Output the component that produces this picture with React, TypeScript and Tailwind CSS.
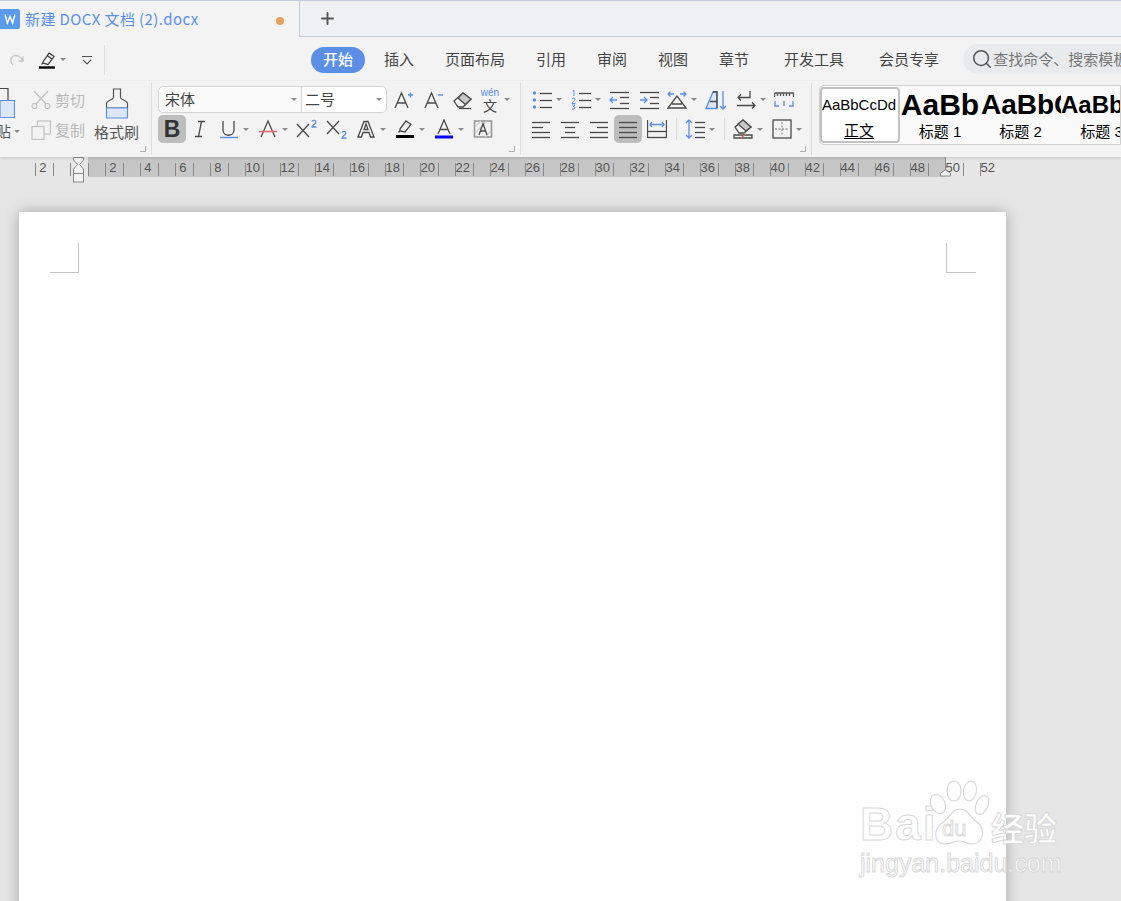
import type { ReactNode } from "react"
import { Plus, Search } from "lucide-react"

const ink = "#4a4a4a"
const blue = "#5b8fe6"

function Caret() {
  return <span className="w-0 h-0 border-x-[3px] border-x-transparent border-t-[3px] border-t-[#8a8a8a]" />
}

function Tool({ className, caret, children }: { className: string; caret?: boolean; children: ReactNode }) {
  return (
    <div className={`h-full flex items-center justify-center gap-[4px] shrink-0 ${className}`}>
      {children}
      {caret && <Caret />}
    </div>
  )
}

function Ico({ children, w = 20, h = 20 }: { children: ReactNode; w?: number; h?: number }) {
  return (
    <svg width={w} height={h} viewBox={`0 0 ${w} ${h}`} fill="none" stroke={ink} strokeWidth="1.3">
      {children}
    </svg>
  )
}

function Lines({ x1, x2, ys, color = ink }: { x1: number; x2: number; ys: number[]; color?: string }) {
  return (
    <>
      {ys.map((y) => (
        <path key={y} d={`M${x1} ${y}.5H${x2}`} stroke={color} />
      ))}
    </>
  )
}

function Launcher() {
  return (
    <svg width="6" height="6" viewBox="0 0 6 6" fill="none" stroke="#b0b0b0" className="absolute right-[5px] bottom-[3px]">
      <path d="M0 5.5H5.5V0" />
    </svg>
  )
}

function Sep({ className }: { className: string }) {
  return <div className={`w-px bg-[#dcdcdc] ${className}`} />
}

function TabBar() {
  return (
    <div className="h-[37px] flex bg-[#f0f1f5] border-t border-[#c4cadb]">
      <div className="w-[300px] h-[37px] -mt-px bg-[#f3f3f3] border-t border-r border-[#c4cadb] flex items-center relative z-10">
        <div className="w-[20px] h-[20px] bg-[#5b9bec] rounded-r-[2px] flex items-center justify-center">
          <svg width="14" height="12" viewBox="0 0 14 12" fill="none" stroke="#fff" strokeWidth="1.4">
            <path d="M2 1.5L4.4 10L7 3.5L9.6 10L12 1.5" />
          </svg>
        </div>
        <span className="ml-[5px] text-[15px] tracking-[0.4px] text-[#5b8fe6] whitespace-nowrap">新建 DOCX 文档 (2).docx</span>
        <span className="absolute left-[276px] top-[16px] w-[8px] h-[8px] rounded-full bg-[#e9a05c]" />
      </div>
      <div className="flex-1 border-b border-[#c4cadb] flex items-center pl-[18px]">
        <Plus size={19} strokeWidth={2.4} color="#555" />
      </div>
    </div>
  )
}

function MenuBar() {
  return (
    <div className="h-[44px] flex items-center bg-[#f3f3f3] text-[15px] text-[#444] whitespace-nowrap">
      <div className="w-[105px] h-[30px] mt-[1px] flex items-center border-r border-[#dcdcdc] shrink-0">
        <svg width="16" height="16" viewBox="0 0 16 16" fill="none" stroke="#c4c4c4" strokeWidth="1.3" className="ml-[9px]">
          <path d="M14 4.5V9H9.5M14 9C12 4.5 8 2.5 4.5 4C1 6 1 10.5 4 13" />
        </svg>
        <div className="ml-[13px] flex items-center gap-[4px]">
          <svg width="18" height="18" viewBox="0 0 18 18" fill="none" stroke="#333" strokeWidth="1.2">
            <path d="M5 11L11 2L16 5.5L10 13.5L5 12Z M3.5 13.5L5 11.5M9 4.5L14 8" />
            <path d="M1 16.5H17" stroke="#000" strokeWidth="2.4" />
          </svg>
          <Caret />
        </div>
        <svg width="10" height="10" viewBox="0 0 10 10" fill="none" stroke="#555" strokeWidth="1.1" className="ml-[16px]">
          <path d="M0 1.5H10M1 5L5 9L9 5" />
        </svg>
      </div>
      <div className="ml-[206px] w-[54px] h-[26px] mt-[1px] rounded-full bg-[#5b8fe6] text-white font-medium flex items-center justify-center shrink-0">开始</div>
      <div className="ml-[19px] flex items-center gap-[31px]">
        <span>插入</span>
        <span>页面布局</span>
        <span>引用</span>
        <span>审阅</span>
        <span>视图</span>
        <span>章节</span>
        <span className="ml-[4px]">开发工具</span>
        <span className="ml-[4px]">会员专享</span>
      </div>
      <div className="ml-[24px] h-[30px] flex-1 rounded-l-full bg-[#e9eaec] flex items-center pl-[8px] overflow-hidden text-[#777]">
        <Search size={22} strokeWidth={1.7} color="#555" className="shrink-0" />
        <span>查找命令、搜索模板</span>
      </div>
    </div>
  )
}

function ClipboardGroup() {
  return (
    <div className="w-[152px] h-[72px] mt-[2px] shrink-0 flex relative border-r border-[#dcdcdc]">
      <div className="w-[24px] overflow-hidden flex flex-col items-end shrink-0">
        <div className="h-[35px] pt-[5px] pr-[9px]">
          <svg width="15" height="30" viewBox="0 0 15 30" fill="none" stroke={blue} strokeWidth="1.2" className="block">
            <path d="M0 0.5H8V12" stroke="#444" />
            <path d="M0 12.5H14.5V29.5H0Z" fill="#dde6f6" />
          </svg>
        </div>
        <div className="mt-[2px] pr-[4px] flex items-center gap-[3px] text-[15px] text-[#555] whitespace-nowrap">
          粘贴
          <Caret />
        </div>
      </div>
      <div className="w-[64px] flex flex-col text-[15px] text-[#b8b8b8] shrink-0">
        <div className="h-[30px] mt-[2px] flex items-center">
          <svg width="20" height="20" viewBox="0 0 20 20" fill="none" stroke="#c0c0c0" strokeWidth="1.2" className="ml-[7px]">
            <circle cx="3.5" cy="16" r="2.5" />
            <circle cx="16.5" cy="16" r="2.5" />
            <path d="M5 14L17 1M15 14L3 1" />
          </svg>
          <span className="ml-[4px] whitespace-nowrap">剪切</span>
        </div>
        <div className="h-[30px] flex items-center">
          <svg width="20" height="20" viewBox="0 0 20 20" fill="none" stroke="#c0c0c0" strokeWidth="1.2" className="ml-[7px]">
            <rect x="6.5" y="1" width="13" height="13" />
            <rect x="1" y="6.5" width="12" height="13" fill="#f3f3f3" />
          </svg>
          <span className="ml-[4px] whitespace-nowrap">复制</span>
        </div>
      </div>
      <div className="w-[55px] flex flex-col items-center pt-[5px] pl-[2px] shrink-0">
        <svg width="24" height="31" viewBox="0 0 24 31" fill="none" stroke="#555" strokeWidth="1.2">
          <path d="M8.5 1H15.5V9.5C15.5 12 22.5 12 22.5 15.5V20H1.5V15.5C1.5 12 8.5 12 8.5 9.5Z" />
          <path d="M1.5 20H22.5V30H1.5Z" fill="#dde6f6" stroke={blue} />
        </svg>
        <span className="mt-[2px] text-[15px] text-[#555] whitespace-nowrap">格式刷</span>
      </div>
      <Launcher />
    </div>
  )
}

function FontGroup() {
  return (
    <div className="w-[369px] h-[72px] mt-[2px] shrink-0 relative border-r border-[#dcdcdc] pl-[6px] flex flex-col">
      <div className="h-[29px] mt-[2px] flex items-center text-[#444]">
        <div className="w-[229px] h-[27px] flex bg-white border border-[#d4d4d4] rounded-[5px] shrink-0 text-[15px]">
          <div className="w-[143px] flex items-center pl-[6px] border-r border-[#d4d4d4] relative bg-[#fafafa] rounded-l-[5px]">
            宋体
            <span className="absolute right-[4px] top-[11px] flex"><Caret /></span>
          </div>
          <div className="flex-1 flex items-center pl-[3px] relative">
            二号
            <span className="absolute right-[4px] top-[11px] flex"><Caret /></span>
          </div>
        </div>
        <Tool className="w-[32px]">
          <Ico>
            <path d="M2 18L8.5 3L15 18M4.5 13H12.5" />
            <path d="M15 5H20M17.5 2.5V7.5" stroke={blue} strokeWidth="1.4" />
          </Ico>
        </Tool>
        <Tool className="w-[28px]">
          <Ico>
            <path d="M2 18L8.5 3L15 18M4.5 13H12.5" />
            <path d="M15 5H20" stroke={blue} strokeWidth="1.4" />
          </Ico>
        </Tool>
        <Tool className="w-[30px]">
          <Ico>
            <path d="M2 11L11 3L19 9L11 17H6Z" />
            <path d="M11 3L19 9L13.5 14.5L6 8Z" fill="#c8c8c8" />
            <path d="M7 18.5H19" />
          </Ico>
        </Tool>
        <Tool className="w-[36px]" caret>
          <div className="w-[20px] flex flex-col items-center">
            <span className="text-[10px] leading-[10px] text-[#5b8fe6] [font-family:'Liberation_Sans']">wén</span>
            <span className="text-[14px] leading-[14px] text-[#444]">文</span>
          </div>
        </Tool>
      </div>
      <div className="h-[28px] mt-[1px] flex items-center">
        <Tool className="w-[28px] bg-[#bdbdbd] rounded-[5px]">
          <span className="text-[23px] font-bold text-[#333] [font-family:'Liberation_Sans']">B</span>
        </Tool>
        <Tool className="w-[28px]">
          <Ico><path d="M8 2.5H15M5 17.5H12M11.5 2.5L8.5 17.5" /></Ico>
        </Tool>
        <Tool className="w-[40px]" caret>
          <Ico>
            <path d="M4 2V11C4 18 15 18 15 11V2" />
            <path d="M1 18.5H19" stroke={blue} strokeWidth="1.4" />
          </Ico>
        </Tool>
        <Tool className="w-[38px]" caret>
          <Ico>
            <path d="M3 18L10 2L17 18" />
            <path d="M1 12.5H19" stroke="#e06c6c" strokeWidth="1.6" />
          </Ico>
        </Tool>
        <Tool className="w-[30px]">
          <Ico w={22}>
            <path d="M1 5L13 18M13 5L1 18" />
            <path d="M16 2.5C17 1 20 1 20 3C20 5 16 6 16 8H20.5" stroke={blue} />
          </Ico>
        </Tool>
        <Tool className="w-[30px]">
          <Ico w={22}>
            <path d="M1 2L13 15M13 2L1 15" />
            <path d="M16 13.5C17 12 20 12 20 14C20 16 16 17 16 19H20.5" stroke={blue} />
          </Ico>
        </Tool>
        <Tool className="w-[38px]" caret>
          <Ico>
            <path d="M2 18L8 2.5H12L18 18H14.5L13 13.5H7L5.5 18ZM8 10.5H12L10 5Z" />
          </Ico>
        </Tool>
        <Tool className="w-[40px]" caret>
          <Ico>
            <path d="M5 10L11 2L16 5.5L10 13L5 12Z" />
            <path d="M3.5 13.5L5 11.5" />
            <path d="M1 17.5H19" stroke="#000" strokeWidth="3" />
          </Ico>
        </Tool>
        <Tool className="w-[38px]" caret>
          <Ico>
            <path d="M4 15L10 1L16 15M6 10.5H14" />
            <path d="M1 18H19" stroke="#0000f0" strokeWidth="3" />
          </Ico>
        </Tool>
        <Tool className="w-[30px]">
          <Ico>
            <rect x="1.5" y="2" width="17" height="16" stroke="#999" strokeWidth="1.6" />
            <path d="M2 8L8 2M2 14L14 2M12 18L18 12" stroke="#ccc" />
            <path d="M6 16L10 4.5L14 16M7.5 12H12.5" />
          </Ico>
        </Tool>
      </div>
      <Launcher />
    </div>
  )
}

function ParagraphGroup() {
  return (
    <div className="w-[291px] h-[72px] mt-[2px] shrink-0 relative border-r border-[#dcdcdc] pl-[5px] flex flex-col">
      <div className="h-[29px] mt-[2px] flex items-center">
        <Tool className="w-[42px]" caret>
          <Ico>
            <circle cx="2.5" cy="3" r="1.7" fill={blue} stroke="none" />
            <circle cx="2.5" cy="10" r="1.7" fill={blue} stroke="none" />
            <circle cx="2.5" cy="17" r="1.7" fill={blue} stroke="none" />
            <Lines x1={8} x2={20} ys={[3, 10, 17]} />
          </Ico>
        </Tool>
        <Tool className="w-[36px]" caret>
          <Ico>
            <path d="M1.5 1L3 0.5V6M1 9C2 7.5 4 8 4 9.5C4 11 1 12 1 13.5H4.5M1 15H4L2.5 16.5C4.5 16.5 4.5 19.5 1 19" stroke={blue} strokeWidth="1" />
            <Lines x1={8} x2={20} ys={[3, 10, 17]} />
          </Ico>
        </Tool>
        <Tool className="w-[30px]">
          <Ico>
            <Lines x1={1} x2={20} ys={[2, 18]} />
            <Lines x1={11} x2={20} ys={[7, 13]} />
            <path d="M8 10H1M4 7L1 10L4 13" stroke={blue} />
          </Ico>
        </Tool>
        <Tool className="w-[30px]">
          <Ico>
            <Lines x1={1} x2={20} ys={[2, 18]} />
            <Lines x1={11} x2={20} ys={[7, 13]} />
            <path d="M1 10H8M5 7L8 10L5 13" stroke={blue} />
          </Ico>
        </Tool>
        <Tool className="w-[36px]" caret>
          <Ico>
            <path d="M1 18L10 6L19 18H1Z M5 14H15" />
            <path d="M1 4H7M3.5 1.5L1 4L3.5 6.5M13 4H19M16.5 1.5L19 4L16.5 6.5" stroke={blue} />
          </Ico>
        </Tool>
        <Tool className="w-[32px]">
          <Ico w={22}>
            <path d="M1 18.5L8 2H12V18.5H1Z" fill="#dde6f6" stroke={blue} />
            <path d="M8 2H12V18M5 11.5H12" />
            <path d="M18 1V19M15 16L18 19L21 16" stroke={blue} />
          </Ico>
        </Tool>
        <Tool className="w-[38px]" caret>
          <Ico>
            <path d="M14 1V7.5H2M5 4.5L2 7.5L5 10.5" />
            <path d="M1 15.5H19M16 12.5L19 15.5L16 18.5" />
          </Ico>
        </Tool>
        <Tool className="w-[28px]">
          <Ico>
            <path d="M0.5 3H19.5V7M0.5 3V7M3.5 3V6M6.5 3V6M9.5 3V6M12.5 3V6M15.5 3V6" stroke="#555" />
            <path d="M1 11V16H5M15 16H19V11M10 11V16" stroke={blue} />
          </Ico>
        </Tool>
      </div>
      <div className="h-[28px] mt-[1px] flex items-center">
        <Tool className="w-[29px]">
          <Ico>
            <Lines x1={1} x2={19} ys={[3, 13, 18]} />
            <Lines x1={1} x2={12} ys={[8]} />
          </Ico>
        </Tool>
        <Tool className="w-[29px]">
          <Ico>
            <Lines x1={1} x2={19} ys={[3, 18]} />
            <Lines x1={5} x2={15} ys={[8, 13]} />
          </Ico>
        </Tool>
        <Tool className="w-[30px]">
          <Ico>
            <Lines x1={1} x2={19} ys={[3, 13, 18]} />
            <Lines x1={8} x2={19} ys={[8]} />
          </Ico>
        </Tool>
        <Tool className="w-[28px] bg-[#bdbdbd] rounded-[5px]">
          <Ico>
            <Lines x1={1} x2={19} ys={[3, 8, 13, 18]} />
          </Ico>
        </Tool>
        <Tool className="w-[30px]">
          <Ico>
            <path d="M0.5 1V19M19.5 1V19" />
            <Lines x1={1} x2={19} ys={[12, 18]} />
            <path d="M3 5.5H17M5 3L3 5.5L5 8M15 3L17 5.5L15 8" stroke={blue} />
          </Ico>
        </Tool>
        <div className="w-[8px] h-full flex items-center justify-center shrink-0"><Sep className="h-[22px]" /></div>
        <Tool className="w-[40px]" caret>
          <Ico>
            <path d="M4 1V19M1 4L4 1L7 4M1 16L4 19L7 16" stroke={blue} />
            <Lines x1={10} x2={20} ys={[3, 8, 13, 18]} />
          </Ico>
        </Tool>
        <div className="w-[8px] h-full flex items-center justify-center shrink-0"><Sep className="h-[22px]" /></div>
        <Tool className="w-[40px]" caret>
          <Ico>
            <path d="M2 8L10 1L18 8L11 14H6Z" />
            <path d="M10 1L18 8L13 12L5 5Z" fill="#c8c8c8" />
            <path d="M1 16H19V19H1Z" />
            <path d="M8 19L13 15" stroke="#e06c6c" />
          </Ico>
        </Tool>
        <Tool className="w-[38px]" caret>
          <Ico>
            <rect x="1" y="1" width="18" height="18" />
            <path d="M10 3V17M3 10H17" stroke="#999" strokeDasharray="2 1.5" />
          </Ico>
        </Tool>
      </div>
      <Launcher />
    </div>
  )
}

function StyleGallery() {
  return (
    <div className="ml-[7px] h-[60px] mt-[4px] flex-1 bg-[#fafafa] border border-[#cfcfcf] rounded-l-[5px] flex overflow-hidden text-black whitespace-nowrap [font-family:'Liberation_Sans','Noto_Sans_CJK_SC',sans-serif]">
      <div className="w-[80px] h-[56px] mt-[1px] border-2 border-[#c2c2c2] rounded-[4px] bg-white flex flex-col items-center shrink-0">
        <span className="h-[33px] flex items-center text-[15px] -ml-[2px]">AaBbCcDd</span>
        <span className="text-[15px] underline underline-offset-2 leading-[18px] -ml-[2px]">正文</span>
      </div>
      <div className="w-[80px] flex flex-col items-center overflow-hidden shrink-0">
        <span className="h-[37px] flex items-center text-[30px] font-bold">AaBb</span>
        <span className="text-[15px] leading-[18px]">标题 1</span>
      </div>
      <div className="w-[81px] flex flex-col items-center overflow-hidden shrink-0">
        <span className="h-[37px] w-full pl-[1px] flex items-center text-[28px] font-bold">AaBbC</span>
        <span className="text-[15px] leading-[18px]">标题 2</span>
      </div>
      <div className="w-[81px] flex flex-col items-center shrink-0">
        <span className="h-[37px] w-full flex items-center text-[24px] font-bold">AaBbC</span>
        <span className="text-[15px] leading-[18px]">标题 3</span>
      </div>
    </div>
  )
}

function Ribbon() {
  return (
    <div className="h-[76px] flex items-start bg-[#f3f3f3] shadow-[0_1px_3px_rgba(0,0,0,0.12)] relative z-10">
      <ClipboardGroup />
      <FontGroup />
      <ParagraphGroup />
      <StyleGallery />
    </div>
  )
}

function Ruler() {
  const cells = Array.from({ length: 55 }, (_, i) => i)
  return (
    <div className="h-[20px] pl-[35px] flex relative text-[13px] text-[#555] [font-family:'Liberation_Sans',sans-serif]">
      {cells.map((i) => {
        const x = 35 + i * 17.5
        const shaded = x >= 87 && x < 944
        const marks = i === 0 || (i >= 4 && i % 2 === 0)
        const value = i === 0 ? 2 : i - 2
        return (
          <div key={i} className={`w-[17.5px] h-full shrink-0 flex items-start relative ${shaded ? "bg-[#c6c6c6]" : ""}`}>
            <span className="absolute left-0 top-[6px] w-px h-[13px] bg-[#8a8a8a]" />
            {marks && <span className="w-full text-center leading-[21px] -ml-px">{value}</span>}
          </div>
        )
      })}
      <svg width="16" height="26" viewBox="0 0 16 26" fill="#f3f3f3" stroke="#888" className="absolute left-[71px] top-0">
        <path d="M2.5 0.5H12.5V3L8.5 7.5L12.5 12V16.5H2.5V12L6.5 7.5L2.5 3Z" />
        <rect x="2.5" y="16.5" width="10" height="8.5" />
      </svg>
      <svg width="14" height="20" viewBox="0 0 14 20" fill="#f3f3f3" stroke="#888" className="absolute left-[939px] top-0">
        <path d="M6.5 0V13" fill="none" />
        <path d="M1.5 19V16L6.5 13L11.5 16V19Z" />
      </svg>
    </div>
  )
}

function Watermark() {
  return (
    <div className="absolute left-[860px] top-[780px] w-[205px] h-[100px] text-white [-webkit-text-stroke:1px_#d9d9d9] [font-family:'Liberation_Sans',sans-serif] pointer-events-none">
      <div className="flex items-end h-[66px]">
        <span className="text-[46px] leading-[44px] font-bold tracking-[2px] w-[68px] shrink-0 whitespace-nowrap">Bai</span>
        <div className="w-[64px] h-[66px] relative shrink-0">
          <svg width="64" height="66" viewBox="0 0 64 66" fill="#fff" stroke="#d9d9d9" strokeWidth="1.2" className="absolute inset-0">
            <ellipse cx="10" cy="24" rx="7" ry="10" transform="rotate(-25 10 24)" />
            <ellipse cx="26" cy="11" rx="7" ry="10" />
            <ellipse cx="42" cy="11" rx="6.5" ry="10" transform="rotate(10 42 11)" />
            <ellipse cx="54" cy="25" rx="6" ry="10" transform="rotate(25 54 25)" />
            <path d="M32 29C40 29 42 38 50 43C58 50 55 64 44 64C38 64 36 61 31 61C25 61 24 64 17 64C7 64 4 52 13 44C22 39 23 29 32 29Z" />
          </svg>
          <span className="absolute left-[14px] top-[37px] text-[22px] leading-[24px] font-normal">du</span>
        </div>
        <span className="text-[33px] leading-[38px] font-bold whitespace-nowrap [font-family:'Noto_Sans_CJK_SC',sans-serif] -ml-[1px]">经验</span>
      </div>
      <div className="mt-[3px] text-[25px] leading-[28px] whitespace-nowrap">jingyan.baidu.com</div>
    </div>
  )
}

export default function App() {
  return (
    <div className="w-[1121px] h-[901px] overflow-hidden bg-[#e6e6e6] relative [font-family:'Noto_Sans_CJK_SC','Noto_Sans',sans-serif]">
      <TabBar />
      <MenuBar />
      <Ribbon />
      <Ruler />
      <div className="ml-[19px] mt-[35px] w-[987px] h-[800px] bg-white shadow-[0_0_14px_rgba(0,0,0,0.28)] pt-[31px] pl-[31px] pr-[30px] flex justify-between items-start">
        <div className="w-[29px] h-[30px] border-r border-b border-[#c4c4c4]" />
        <div className="w-[30px] h-[30px] border-l border-b border-[#c4c4c4]" />
      </div>
      <Watermark />
    </div>
  )
}
